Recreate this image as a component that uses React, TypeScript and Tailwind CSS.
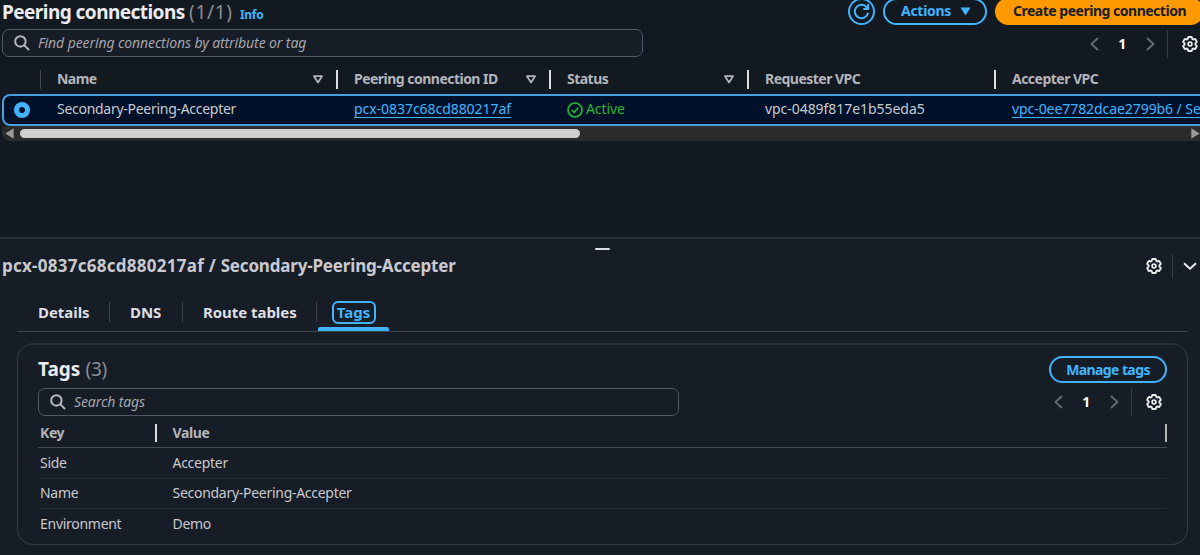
import { ReactNode } from "react";
import clsx from "clsx";

const columns = [
  { label: "Name", filter: true },
  { label: "Peering connection ID", filter: true },
  { label: "Status", filter: true },
  { label: "Requester VPC", filter: false },
  { label: "Accepter VPC", filter: false },
];

const tags = [
  { key: "Side", value: "Accepter" },
  { key: "Name", value: "Secondary-Peering-Accepter" },
  { key: "Environment", value: "Demo" },
];

const tableGrid = "grid grid-cols-[40px_297px_213px_198px_247px_225px]";

function Gear() {
  return (
    <svg
      className="overflow-visible"
      width="16"
      height="16"
      viewBox="-8 -8 16 16"
      fill="none"
      stroke="#e9ebed"
      strokeWidth="1.9"
      strokeLinejoin="round"
    >
      <path d="M-1.7-7h3.4l.6 2 .9.5 2-.6 1.7 3-1.5 1.5v1.2l1.5 1.5-1.7 3-2-.6-.9.5-.6 2h-3.4l-.6-2-.9-.5-2 .6-1.7-3 1.5-1.5v-1.2l-1.5-1.5 1.7-3 2 .6.9-.5z" />
      <circle r="1.9" strokeWidth="1.7" />
    </svg>
  );
}

function Chevron({ dir }: { dir: "left" | "right" | "down" }) {
  const paths = {
    left: "M12 2 5.5 8l6.5 6",
    right: "M5 2l6.5 6L5 14",
    down: "M2 5.2l6 5.6 6-5.6",
  };
  return (
    <svg
      width="16"
      height="16"
      viewBox="0 0 16 16"
      fill="none"
      stroke={dir === "down" ? "#e9ebed" : "#656871"}
      strokeWidth="2"
      strokeLinejoin="round"
    >
      <path d={paths[dir]} />
    </svg>
  );
}

function SearchBox({ placeholder }: { placeholder: string }) {
  return (
    <div className="flex h-[28px] w-[641px] items-center rounded-[7px] border border-[#4f5a66] bg-[#161d26] pl-[11px]">
      <svg width="16" height="16" viewBox="0 0 15 15" fill="none" stroke="#b4b4bb" strokeWidth="1.9">
        <circle cx="6" cy="6" r="4.9" />
        <path d="M9.5 9.5l4.6 4.6" />
      </svg>
      <span className="ml-[8px] text-[14px] tracking-[-0.1px] text-[#a4a4ad] italic">{placeholder}</span>
    </div>
  );
}

function Pagination() {
  return (
    <div className="flex h-[28px] items-center">
      <Chevron dir="left" />
      <span className="w-[40px] pb-px text-center text-[14px] font-bold text-white">1</span>
      <Chevron dir="right" />
      <span className="ml-[9px] h-[28px] w-px bg-[#333c47]" />
      <span className="ml-[14px]">
        <Gear />
      </span>
    </div>
  );
}

function Tab({ children, className }: { children: ReactNode; className?: string }) {
  return (
    <div className={clsx("flex h-[20px] items-center border-r border-[#3a434e] pb-px", className)}>
      {children}
    </div>
  );
}

export default function App() {
  return (
    <div className="h-[555px] w-[1200px] overflow-hidden bg-[#0f141a] font-['Noto_Sans',sans-serif] text-[14px] leading-[20px] tracking-[-0.28px] text-[#c9c9cf]">
      {/* Peering connections table */}
      <section className="h-[237px] bg-[#121920]">
        <div className="flex h-[29px] items-start justify-between overflow-hidden">
          <div className="flex h-[24px] items-center pl-[2px] whitespace-nowrap">
            <h1 className="w-[187px] text-[19px] font-bold tracking-[-0.55px] text-[#ebebf0]">Peering connections</h1>
            <span className="w-[51px] text-[19px] tracking-[0.7px] text-[#8c8c94]">(1/1)</span>
            <a className="mt-[5px] text-[12px] font-bold tracking-[-0.3px] text-[#42b4ff]">Info</a>
          </div>
          <div className="-mt-[2px] -mr-[4px] flex gap-[8px]">
            <button className="flex h-[27px] w-[27px] items-center justify-center rounded-full border-2 border-[#42b4ff]">
              <svg width="17" height="17" viewBox="0 0 16 16" fill="none" stroke="#42b4ff" strokeWidth="1.9">
                <path d="M14.2 9.2A6.3 6.3 0 1 1 12.6 3.7L14 5.1" />
                <path d="M14.2 1v4.6H9.6" />
              </svg>
            </button>
            <button className="flex h-[27px] w-[104px] items-center justify-between rounded-full border-2 border-[#42b4ff] pr-[14px] pl-[16px] font-bold text-[#42b4ff]">
              <span className="-mt-[2px]">Actions</span>
              <svg width="11" height="9" viewBox="0 0 11 9">
                <path d="M.5.5h10l-5 8z" fill="#42b4ff" />
              </svg>
            </button>
            <button className="h-[27px] w-[209px] rounded-full bg-[#ff9900] pb-[2px] pl-[18px] text-left font-bold tracking-[-0.49px] whitespace-nowrap text-[#161d26]">
              Create peering connection
            </button>
          </div>
        </div>

        <div className="flex justify-between pl-[2px]">
          <SearchBox placeholder="Find peering connections by attribute or tag" />
          <div className="mt-px mr-[2px]">
            <Pagination />
          </div>
        </div>

        <div className={clsx(tableGrid, "-mt-px h-[37px] overflow-hidden pt-[7px]")}>
          <span />
          {columns.map((col, i) => (
            <div
              key={col.label}
              className="relative flex items-center pl-[17px] font-bold tracking-[-0.52px] text-[#b4b4bb]"
            >
              <span
                className={clsx(
                  "absolute left-0 h-[19px]",
                  i === 0 ? "w-px bg-[#424650]" : "-ml-px w-[2px] bg-[#dedee3]"
                )}
              />
              <span>{col.label}</span>
              {col.filter && (
                <svg className="mr-[14px] ml-auto" width="10" height="9" viewBox="0 0 10 9" fill="none">
                  <path d="M1 1.2h8L5 7.4z" stroke="#b4b4bb" strokeWidth="1.8" strokeLinejoin="round" />
                </svg>
              )}
            </div>
          ))}
        </div>

        <div className="overflow-hidden pl-[2px]">
          <div className="h-[32px] w-[1220px] rounded-[8px] bg-[#001129] shadow-[inset_0_0_0_2px_#4a9fdf]">
            <div className={clsx(tableGrid, "-ml-[2px] h-full items-center whitespace-nowrap")}>
              <span className="mb-px ml-[14px] h-[16px] w-[16px] rounded-full border-[5px] border-[#42b4ff] bg-[#001129]" />
              <span className="pb-[2px] pl-[17px]">Secondary-Peering-Accepter</span>
              <span className="pb-[2px] pl-[17px] tracking-[-0.05px] text-[#42b4ff] underline decoration-1 underline-offset-[3px]">
                pcx-0837c68cd880217af
              </span>
              <span className="flex items-center pl-[17px] tracking-[-0.1px] text-[#2bb534]">
                <svg className="mr-[3px]" width="16" height="16" viewBox="0 0 16 16" fill="none" stroke="#2bb534" strokeWidth="1.7">
                  <circle cx="8" cy="8" r="7" />
                  <path d="M4.8 8l2.4 2.4 4-4.6" />
                </svg>
                <span className="pb-[2px]">Active</span>
              </span>
              <span className="pb-[2px] pl-[17px] tracking-[-0.05px]">vpc-0489f817e1b55eda5</span>
              <span className="pb-[2px] pl-[17px] tracking-[-0.07px] text-[#42b4ff] underline decoration-1 underline-offset-[3px]">
                vpc-0ee7782dcae2799b6 / Secondary
              </span>
            </div>
          </div>
        </div>

        <div className="ml-[2px] flex h-[15px] items-center rounded-bl-[8px] bg-[#2b2b2b] pl-[3px]">
          <svg width="9" height="11" viewBox="0 0 8 10">
            <path d="M7.8.2v9.6L.2 5z" fill="#9a9a9a" />
          </svg>
          <span className="ml-[6px] h-[9px] w-[560px] rounded-full bg-[#cfcfcf]" />
          <svg className="ml-auto" width="9" height="11" viewBox="0 0 8 10">
            <path d="M.2.2v9.6L7.8 5z" fill="#9a9a9a" />
          </svg>
        </div>
      </section>

      {/* Split panel */}
      <section className="h-[318px] border-t-2 border-[#262f3a] bg-[#161d26]">
        <div className="flex h-[14px] items-end justify-center pb-[3px] pl-[5px]">
          <span className="h-[2px] w-[15px] rounded-full bg-[#dedee3]" />
        </div>
        <div className="flex h-[26px] items-center pr-[2px] pl-[2px]">
          <h2 className="text-[17px] font-bold text-[#c9c9cf]">
            <span className="tracking-[0.26px]">pcx-0837c68cd880217af / </span>
            <span className="tracking-[-0.18px]">Secondary-Peering-Accepter</span>
          </h2>
          <span className="ml-auto">
            <Gear />
          </span>
          <span className="mr-[9px] ml-[10px] h-[24px] w-px bg-[#333c47]" />
          <Chevron dir="down" />
        </div>

        <div className="mr-[12px] ml-[17px] flex h-[53px] items-end border-b border-[#3a434e] text-[15px] font-bold tracking-[-0.05px] text-[#dedee3]">
          <Tab className="mb-[9px] w-[93px] pl-[21px]">Details</Tab>
          <Tab className="mb-[9px] w-[73px] pl-[20px]">DNS</Tab>
          <Tab className="mb-[9px] w-[134px] pl-[20px]">Route tables</Tab>
          <div className="ml-px flex w-[71px] flex-col items-center">
            <span className="mb-[3px] flex h-[23px] w-[44px] items-center justify-center rounded-[6px] border-2 border-[#42b4ff] pb-px text-[#42b4ff]">
              Tags
            </span>
            <span className="h-[4px] w-full rounded-t-[2px] bg-[#42b4ff]" />
          </div>
        </div>

        <div className="mt-[11px] mr-[12px] ml-[17px] h-[202px] rounded-[16px] border border-t-2 border-[#333c47] border-t-[#262f3a] pt-[11px] pr-[20px] pl-[20px]">
          <div className="flex h-[32px] justify-between">
            <h3 className="flex h-[26px] items-center text-[19px] font-bold tracking-normal text-[#ebebf0]">
              Tags<span className="ml-[5px] font-normal tracking-[-0.2px] text-[#8c8c94]">(3)</span>
            </h3>
            <button className="h-[27px] w-[118px] rounded-full border-2 border-[#42b4ff] text-[14px] leading-[22px] font-bold tracking-[-0.6px] text-[#42b4ff]">
              Manage tags
            </button>
          </div>
          <div className="flex justify-between">
            <SearchBox placeholder="Search tags" />
            <div className="mr-[5px]">
              <Pagination />
            </div>
          </div>
          <div className="grid h-[32px] grid-cols-[119px_1fr] items-center border-b border-[#424b57] pt-[2px] font-bold tracking-[-0.4px] text-[#b4b4bb]">
            <span className="flex h-[18px] items-center border-r-2 border-[#dedee3] pl-[2px]">Key</span>
            <span className="flex h-[18px] items-center border-r-2 border-[#b4b4bb] pl-[15.5px]">Value</span>
          </div>
          {tags.map((tag, i) => (
            <div
              key={tag.key}
              className={clsx(
                "grid grid-cols-[119px_1fr] items-center border-b border-[#232b37] last:border-b-0",
                i === 0 ? "h-[31px]" : "h-[30px] pb-px"
              )}
            >
              <span className="pl-[2px]">{tag.key}</span>
              <span className="pl-[15.5px]">{tag.value}</span>
            </div>
          ))}
        </div>
      </section>
    </div>
  );
}
